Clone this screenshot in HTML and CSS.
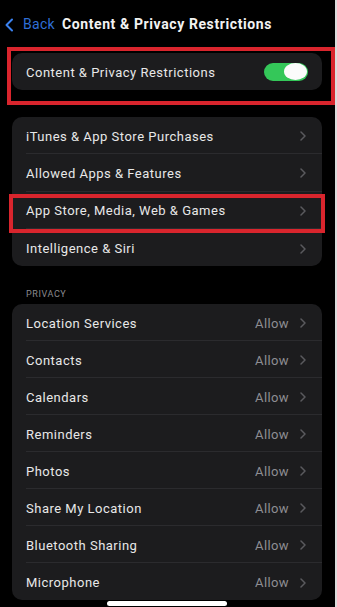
FILE: index.html
```html
<!DOCTYPE html>
<html>
<head>
<meta charset="utf-8">
<link rel="stylesheet" href="styles.css">
</head>
<body>
<div class="screen">
  <header class="nav">
    <span class="back">
      <svg class="back-icon" width="10" height="14" viewBox="0 0 10 14"><path d="M8 1.5 L2.5 7 L8 12.5" fill="none" stroke="#3b82f0" stroke-width="2" stroke-linecap="round" stroke-linejoin="round"/></svg>
      <span class="back-label">Back</span>
    </span>
    <span class="nav-title">Content &amp; Privacy Restrictions</span>
  </header>

  <div class="frame">
    <div class="card">
      <div class="row">
        <div class="row-inner">
          <span class="label">Content &amp; Privacy Restrictions</span>
          <span class="toggle"><span class="knob"></span></span>
        </div>
      </div>
    </div>
  </div>

  <div class="card card-gap card-tall">
    <div class="row"><div class="row-inner"><span class="label">iTunes &amp; App Store Purchases</span><svg class="chev" width="6" height="10" viewBox="0 0 6 10"><path d="M1 1 L5 5 L1 9" fill="none" stroke="#5a5a5e" stroke-width="1.5" stroke-linecap="round" stroke-linejoin="round"/></svg></div></div>
    <div class="row"><div class="row-inner"><span class="label">Allowed Apps &amp; Features</span><svg class="chev" width="6" height="10" viewBox="0 0 6 10"><path d="M1 1 L5 5 L1 9" fill="none" stroke="#5a5a5e" stroke-width="1.5" stroke-linecap="round" stroke-linejoin="round"/></svg></div></div>
    <div class="row row-marked"><div class="row-inner"><span class="label">App Store, Media, Web &amp; Games</span><svg class="chev" width="6" height="10" viewBox="0 0 6 10"><path d="M1 1 L5 5 L1 9" fill="none" stroke="#5a5a5e" stroke-width="1.5" stroke-linecap="round" stroke-linejoin="round"/></svg></div></div>
    <div class="row"><div class="row-inner"><span class="label">Intelligence &amp; Siri</span><svg class="chev" width="6" height="10" viewBox="0 0 6 10"><path d="M1 1 L5 5 L1 9" fill="none" stroke="#5a5a5e" stroke-width="1.5" stroke-linecap="round" stroke-linejoin="round"/></svg></div></div>
  </div>

  <div class="section-head">PRIVACY</div>
  <div class="card">
    <div class="row"><div class="row-inner"><span class="label">Location Services</span><span class="value">Allow</span><svg class="chev" width="6" height="10" viewBox="0 0 6 10"><path d="M1 1 L5 5 L1 9" fill="none" stroke="#5a5a5e" stroke-width="1.5" stroke-linecap="round" stroke-linejoin="round"/></svg></div></div>
    <div class="row"><div class="row-inner"><span class="label">Contacts</span><span class="value">Allow</span><svg class="chev" width="6" height="10" viewBox="0 0 6 10"><path d="M1 1 L5 5 L1 9" fill="none" stroke="#5a5a5e" stroke-width="1.5" stroke-linecap="round" stroke-linejoin="round"/></svg></div></div>
    <div class="row"><div class="row-inner"><span class="label">Calendars</span><span class="value">Allow</span><svg class="chev" width="6" height="10" viewBox="0 0 6 10"><path d="M1 1 L5 5 L1 9" fill="none" stroke="#5a5a5e" stroke-width="1.5" stroke-linecap="round" stroke-linejoin="round"/></svg></div></div>
    <div class="row"><div class="row-inner"><span class="label">Reminders</span><span class="value">Allow</span><svg class="chev" width="6" height="10" viewBox="0 0 6 10"><path d="M1 1 L5 5 L1 9" fill="none" stroke="#5a5a5e" stroke-width="1.5" stroke-linecap="round" stroke-linejoin="round"/></svg></div></div>
    <div class="row"><div class="row-inner"><span class="label">Photos</span><span class="value">Allow</span><svg class="chev" width="6" height="10" viewBox="0 0 6 10"><path d="M1 1 L5 5 L1 9" fill="none" stroke="#5a5a5e" stroke-width="1.5" stroke-linecap="round" stroke-linejoin="round"/></svg></div></div>
    <div class="row"><div class="row-inner"><span class="label">Share My Location</span><span class="value">Allow</span><svg class="chev" width="6" height="10" viewBox="0 0 6 10"><path d="M1 1 L5 5 L1 9" fill="none" stroke="#5a5a5e" stroke-width="1.5" stroke-linecap="round" stroke-linejoin="round"/></svg></div></div>
    <div class="row"><div class="row-inner"><span class="label">Bluetooth Sharing</span><span class="value">Allow</span><svg class="chev" width="6" height="10" viewBox="0 0 6 10"><path d="M1 1 L5 5 L1 9" fill="none" stroke="#5a5a5e" stroke-width="1.5" stroke-linecap="round" stroke-linejoin="round"/></svg></div></div>
    <div class="row"><div class="row-inner"><span class="label">Microphone</span><span class="value">Allow</span><svg class="chev" width="6" height="10" viewBox="0 0 6 10"><path d="M1 1 L5 5 L1 9" fill="none" stroke="#5a5a5e" stroke-width="1.5" stroke-linecap="round" stroke-linejoin="round"/></svg></div></div>
  </div>
</div>
<div class="home-indicator"></div>
</body>
</html>
```

FILE: styles.css
```css
html {
  background: linear-gradient(to right, #000 335px, #dcdcdc 335px);
}
body {
  margin: 0;
  height: 607px;
  overflow: hidden;
  font-family: Roboto, "Liberation Sans", sans-serif;
  color: #e6e6e6;
}
.screen {
  width: 335px;
  background: #000;
  min-height: 607px;
}
.nav {
  height: 47px;
  display: flex;
  align-items: flex-start;
  padding-top: 15px;
  box-sizing: border-box;
}
.back {
  display: flex;
  align-items: center;
  margin-left: 4px;
  gap: 9px;
  margin-right: 7px;
}
.back-icon {
  margin-top: 1px;
}
.back-label {
  color: #2f6fd6;
  font-size: 14px;
  line-height: 18px;
  letter-spacing: 0.3px;
}
.nav-title {
  color: #f2f2f2;
  font-size: 14px;
  font-weight: 700;
  line-height: 18px;
  letter-spacing: 0.6px;
}
.frame {
  margin-left: 7px;
  width: 328px;
  box-sizing: border-box;
  border: 4px solid #d9252d;
  padding: 2px 9px 11px 1px;
}
.card {
  background: #1c1c1e;
  border-radius: 10px;
  width: 310px;
  margin-left: 12px;
}
.frame .card {
  margin-left: 0;
}
.card-gap {
  margin-top: 12px;
}
.row {
  position: relative;
  display: flex;
  padding-left: 14px;
}
.row-inner {
  flex: 1;
  display: flex;
  align-items: center;
  height: 37px;
  box-sizing: border-box;
  border-bottom: 1px solid #2b2b2e;
  padding-right: 16px;
  padding-top: 2px;
}
.card-tall .row-inner {
  height: 37.3px;
}
.row:last-child .row-inner {
  border-bottom: none;
}
.label {
  flex: 1;
  font-size: 13px;
  letter-spacing: 0.5px;
  color: #e8e8e8;
  white-space: nowrap;
}
.value {
  font-size: 13px;
  letter-spacing: 0.4px;
  color: #8e8e93;
  margin-right: 11px;
}
.chev {
  display: block;
}
.row-marked::after {
  content: "";
  position: absolute;
  top: 2px;
  bottom: -4px;
  left: -3px;
  right: -3px;
  border: 4px solid #d9252d;
  pointer-events: none;
}
.toggle {
  width: 44px;
  height: 18px;
  border-radius: 9px;
  background: #34c759;
  display: flex;
  align-items: center;
  justify-content: flex-end;
  padding-right: 1px;
  box-sizing: border-box;
  margin-right: -2px;
  margin-top: -2px;
}
.knob {
  width: 23px;
  height: 17px;
  border-radius: 50%;
  background: #fbfbfb;
}
.section-head {
  margin: 22px 0 4px 26px;
  font-size: 9px;
  line-height: 12px;
  letter-spacing: 0.6px;
  color: #8a8a8e;
}
.home-indicator {
  position: fixed;
  left: 107px;
  bottom: 1px;
  width: 120px;
  height: 5px;
  border-radius: 3px;
  background: #fff;
}
```
